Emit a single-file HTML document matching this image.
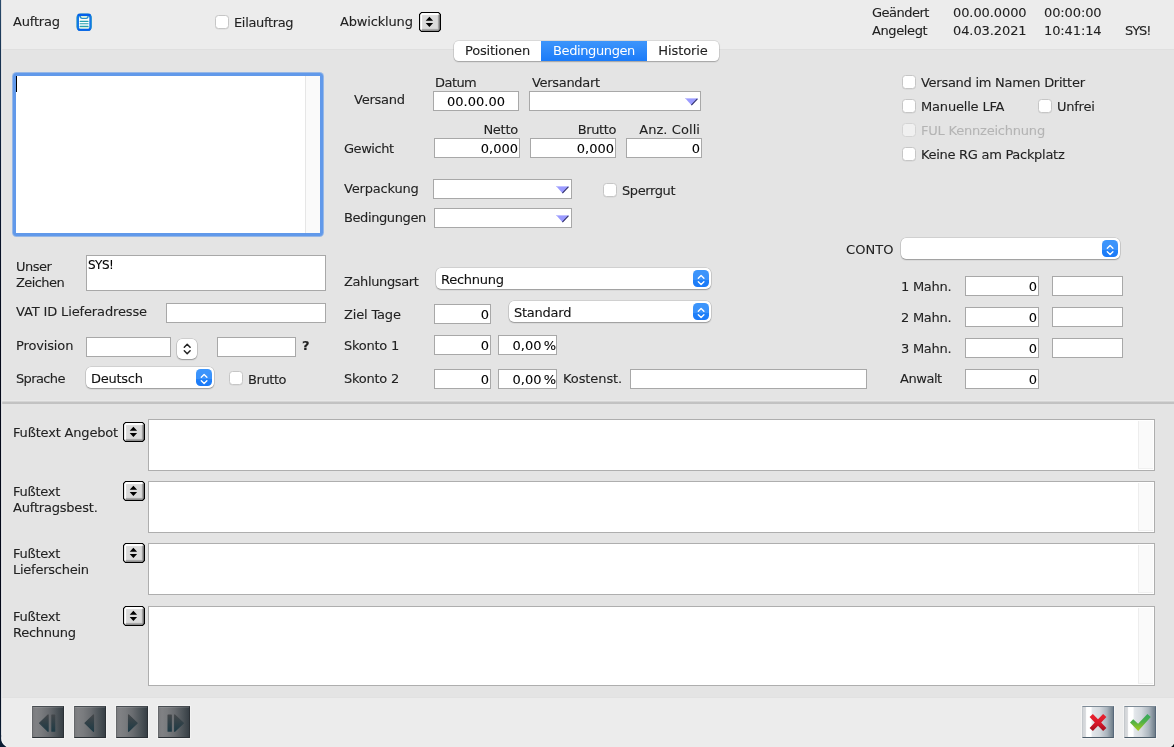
<!DOCTYPE html>
<html lang="de">
<head>
<meta charset="utf-8">
<title>Auftrag – Bedingungen</title>
<style>
*{box-sizing:border-box;margin:0;padding:0}
html,body{width:1174px;height:747px;overflow:hidden;background:#e4e4e4}
body{position:relative;font-family:"DejaVu Sans","Liberation Sans",sans-serif;font-size:13px;color:#222;letter-spacing:-0.25px;-webkit-text-stroke:0.1px currentColor}
#w{position:absolute;left:0;top:0;width:1174px;height:747px;will-change:transform;opacity:.999}
.abs,.l,.f,.cb,.st,.sel,.combo,.ta{position:absolute}
.l{white-space:nowrap;line-height:16px;height:16px;margin-top:1px}
.r{text-align:right}
.f{color:#000;background:#fff;border:1px solid #a8a8a8;height:20px;line-height:20px;white-space:nowrap;overflow:hidden;letter-spacing:0}
.f.r{padding-right:1px}
.f.c{text-align:center}
.cb{width:14px;height:14px;border-radius:3.5px;background:#fff;border:1px solid #c6c6c6;box-shadow:0 0.5px 0.5px rgba(0,0,0,.08)}
.cb.dis{background:#f0f0f0;border-color:#d4d4d4;box-shadow:none}
.dis{color:#b4b4b4}
.st{width:22px;height:20px}
.st svg{position:absolute;left:0;top:0}
.sel{color:#111;height:21px;border-radius:5px;background:#fff;box-shadow:0 0 0 0.5px rgba(0,0,0,.18),0 1px 1.5px rgba(0,0,0,.28);line-height:23px;padding-left:5px;white-space:nowrap}
.sel i{position:absolute;right:2px;top:2px;width:16px;height:17px;border-radius:4.5px;background:linear-gradient(#3d96fb 0,#3991fb 58%,#2081f9 58%,#1a79f8 100%)}
.sel i svg{position:absolute;left:0;top:0}
.combo{background:#fff;border:1px solid #a8a8a8;height:20px}
.combo svg{position:absolute;right:2px;top:6px}
.ta{background:#fff;border:1px solid #aeaeae}
.ta u{position:absolute;right:1px;top:1px;bottom:1px;width:15px;background:#fafafa;border-left:1px solid #ededed;border-bottom:1px solid #f0f0f0}
.nav{position:absolute;width:32px;height:32px;top:706px;border:1px solid #2b3035;border-top-color:#474c51;border-left-color:#66686b;background:linear-gradient(90deg,#7a7b7e 0%,#808184 10%,#797b7e 28%,#696c70 52%,#4c5358 80%,#373f45 100%);box-shadow:inset 0 1px 0 rgba(255,255,255,.10),0 0 0 1px rgba(255,255,255,.35)}
.nav svg{position:absolute;left:0;top:0}
.ok{position:absolute;width:32px;height:32px;top:706px;border:1px solid #58687a;border-top-color:#7d8a96;border-left-color:#c4c8cc;border-bottom-color:#4d5d6a;background:linear-gradient(90deg,#d2d5d8 0%,#d8dadd 8%,#ffffff 12%,#ffffff 26%,#e2e6ea 32%,#d4d9de 55%,#aab4bd 80%,#6e7d89 100%);box-shadow:0 0 0 1px rgba(255,255,255,.4)}
.ok svg{position:absolute;left:0;top:0}
</style>
</head>
<body><div id="w">
<!-- header band -->
<div class="abs" style="left:0;top:0;width:1174px;height:50px;background:#ececec;border-bottom:1px solid #dfdfdf"></div>
<!-- bottom band -->
<div class="abs" style="left:0;top:697px;width:1174px;height:50px;background:#ececec;border-top:1px solid #e1e1e1"></div>
<!-- separator -->
<div class="abs" style="left:0;top:400px;width:1174px;height:4px;background:linear-gradient(180deg,#e8e8e8 0,#e8e8e8 25%,#d5d5d5 25%,#d5d5d5 50%,#c3c3c3 50%,#c1c1c1 100%)"></div>
<!-- left dark edge -->
<div class="abs" style="left:0;top:0;width:1px;height:747px;background:linear-gradient(180deg,#2b4c6d 0,#1a3756 6%,#0c1a33 22%,#050a1a 45%,#030818 90%,#0b2038 100%)"></div><div class="abs" style="left:1px;top:0;width:1px;height:747px;background:#dcdde0"></div><div class="abs" style="left:2px;top:0;width:1px;height:747px;background:rgba(255,255,255,.15)"></div>

<!-- HEADER -->
<div class="l" style="left:13px;top:13px;letter-spacing:-0.18px">Auftrag</div>
<svg class="abs" style="left:76px;top:13px" width="17" height="19" viewBox="0 0 17 19">
  <rect x="0.3" y="0.5" width="15.7" height="17.5" rx="4.2" fill="#3fb6a4" opacity=".75"/>
  <rect x="0.7" y="0.8" width="14.9" height="16.9" rx="3.9" fill="#1277e6"/>
  <rect x="1.6" y="0.8" width="13.1" height="2.3" rx="1.1" fill="#0560ea"/>
  <rect x="1.6" y="15.4" width="13.1" height="2.3" rx="1.1" fill="#0560ea"/>
  <rect x="3" y="3.1" width="10.3" height="12.4" rx="1.6" fill="#fbfefd"/>
  <rect x="3.2" y="14" width="9.9" height="1.4" rx=".7" fill="#d6eede"/>
  <path d="M4.2 3.1C4.2 5.3 5 5.4 6.2 5.4H10.1C11.3 5.4 12.1 5.3 12.1 3.1" fill="#d9f0dc" stroke="#2a8fca" stroke-width="1.3"/>
  <rect x="5.9" y="3.1" width="4.5" height="1.5" fill="#d9f0dc"/>
  <path d="M4.1 8.3h8M4.1 10.75h8M4.1 13.4h8" stroke="#27a0ae" stroke-width="1.15" stroke-linecap="round"/>
</svg>
<div class="cb" style="left:215px;top:15px"></div>
<div class="l" style="left:234px;top:14px;letter-spacing:-0.34px">Eilauftrag</div>
<div class="l" style="left:340px;top:13px;letter-spacing:-0.17px">Abwicklung</div>
<div class="st" style="left:419px;top:12px"><svg width="22" height="20" viewBox="0 0 22 20"><rect x="1" y="1" width="20" height="18" fill="#dbdbdb"/><rect x="1" y="1" width="20" height="2.1" fill="#fff"/><rect x="1" y="1" width="2.1" height="18" fill="#fff"/><rect x="18.7" y="3.1" width=".8" height="14.3" fill="#c2c2c2"/><rect x="19.4" y="2.6" width="1.6" height="16.4" fill="#868686"/><rect x="3.1" y="16.7" width="16.3" height=".8" fill="#c8c8c8"/><rect x="2.6" y="17.4" width="18.4" height="1.6" fill="#8e8e8e"/><path fill-rule="evenodd" d="M2.2 0h17.6L22 2.2v15.6L19.8 20H2.2L0 17.8V2.2zM2.7 1.1L1.1 2.7v14.6l1.6 1.6h16.6l1.6-1.6V2.7l-1.6-1.6z" fill="#000"/><path d="M10.4 4.8L14.1 8.8H6.7zM6.7 11.1h7.4L10.4 15.1z" fill="#000"/></svg></div>

<div class="l" style="left:872px;top:4px;letter-spacing:-0.52px">Geändert</div>
<div class="l" style="left:953px;top:4px;letter-spacing:-0.09px">00.00.0000</div>
<div class="l" style="left:1044px;top:4px;letter-spacing:-0.11px">00:00:00</div>
<div class="l" style="left:872px;top:22px;letter-spacing:-0.39px">Angelegt</div>
<div class="l" style="left:953px;top:22px;letter-spacing:-0.09px">04.03.2021</div>
<div class="l" style="left:1044px;top:22px;letter-spacing:-0.11px">10:41:14</div>
<div class="l" style="left:1125px;top:22px;letter-spacing:-1.1px">SYS!</div>

<!-- TABS -->
<div class="abs" style="left:454px;top:41px;width:265px;height:20px;border-radius:4.5px;background:#fff;box-shadow:0 0 0 0.5px rgba(0,0,0,.15),0 1px 1.5px rgba(0,0,0,.25);overflow:hidden">
  <div class="l" style="left:0;top:1px;width:87px;text-align:center;letter-spacing:-0.2px">Positionen</div>
  <div class="abs" style="left:87px;top:0;width:106px;height:20px;background:linear-gradient(#3d95fb,#1b7bf9)"></div>
  <div class="l" style="left:87px;top:1px;width:106px;text-align:center;color:#fff;-webkit-text-stroke:0;letter-spacing:-0.4px">Bedingungen</div>
  <div class="l" style="left:193px;top:1px;width:72px;text-align:center;letter-spacing:-0.11px">Historie</div>
</div>

<!-- big textarea with focus ring -->
<div class="abs" style="left:13px;top:73px;width:310px;height:163px;border-radius:3.5px;background:#6199ea;box-shadow:0 0 0 1px rgba(97,153,234,.6)"></div>
<div class="abs" style="left:16px;top:76px;width:304px;height:157px;background:#fff"></div>
<div class="abs" style="left:305px;top:76px;width:15px;height:157px;background:#fafafa;border-left:1px solid #e6e6e6"></div>
<div class="abs" style="left:16px;top:76px;width:1px;height:16px;background:#000"></div>

<!-- Versand block -->
<div class="l" style="left:435px;top:74px;letter-spacing:-0.55px">Datum</div>
<div class="l" style="left:532px;top:74px;letter-spacing:-0.31px">Versandart</div>
<div class="l" style="left:354px;top:91px">Versand</div>
<div class="f c" style="left:433px;top:91px;width:86px">00.00.00</div>
<div class="combo" style="left:529px;top:91px;width:172px"><svg width="13" height="8" viewBox="0 0 13 8"><path d="M0 0h13L6.5 7.2z" fill="#9b9bff"/><path d="M0.5 0.4h12" stroke="#c9c9ff" stroke-width=".9"/><path d="M6.4 7.1L12.4 0.9" stroke="#2b2b66" stroke-width="1.1"/></svg></div>

<div class="l r" style="left:434px;top:121px;width:84px">Netto</div>
<div class="l r" style="left:530px;top:121px;width:86px;letter-spacing:-0.42px">Brutto</div>
<div class="l r" style="left:620px;top:121px;width:80px;letter-spacing:0.07px">Anz. Colli</div>
<div class="l" style="left:344px;top:140px;letter-spacing:-0.45px">Gewicht</div>
<div class="f r" style="left:434px;top:138px;width:86px">0,000</div>
<div class="f r" style="left:530px;top:138px;width:86px">0,000</div>
<div class="f r" style="left:626px;top:138px;width:76px">0</div>

<div class="l" style="left:344px;top:180px;letter-spacing:-0.18px">Verpackung</div>
<div class="combo" style="left:433px;top:179px;width:139px"><svg width="13" height="8" viewBox="0 0 13 8"><path d="M0 0h13L6.5 7.2z" fill="#9b9bff"/><path d="M0.5 0.4h12" stroke="#c9c9ff" stroke-width=".9"/><path d="M6.4 7.1L12.4 0.9" stroke="#2b2b66" stroke-width="1.1"/></svg></div>
<div class="cb" style="left:603px;top:183px"></div>
<div class="l" style="left:622px;top:182px;letter-spacing:-0.4px">Sperrgut</div>
<div class="l" style="left:344px;top:209px;letter-spacing:-0.4px">Bedingungen</div>
<div class="combo" style="left:434px;top:208px;width:138px"><svg width="13" height="8" viewBox="0 0 13 8"><path d="M0 0h13L6.5 7.2z" fill="#9b9bff"/><path d="M0.5 0.4h12" stroke="#c9c9ff" stroke-width=".9"/><path d="M6.4 7.1L12.4 0.9" stroke="#2b2b66" stroke-width="1.1"/></svg></div>

<!-- right checkboxes -->
<div class="cb" style="left:902px;top:75px"></div>
<div class="l" style="left:921px;top:74px;letter-spacing:-0.27px">Versand im Namen Dritter</div>
<div class="cb" style="left:902px;top:99px"></div>
<div class="l" style="left:921px;top:98px;letter-spacing:-0.18px">Manuelle LFA</div>
<div class="cb" style="left:1038px;top:99px"></div>
<div class="l" style="left:1057px;top:98px">Unfrei</div>
<div class="cb dis" style="left:902px;top:123px"></div>
<div class="l dis" style="left:921px;top:122px;letter-spacing:-0.21px">FUL Kennzeichnung</div>
<div class="cb" style="left:902px;top:147px"></div>
<div class="l" style="left:921px;top:146px;letter-spacing:-0.29px">Keine RG am Packplatz</div>

<div class="l" style="left:846px;top:241px;letter-spacing:0.05px">CONTO</div>
<div class="sel" style="left:901px;top:238px;width:219px"><i><svg width="16" height="17" viewBox="0 0 16 17"><path d="M5.3 8.3L8.1 5.5l2.8 2.8M5.3 11.7l2.8 2.8 2.8-2.8" fill="none" stroke="#fff" stroke-width="1.35" stroke-linecap="round" stroke-linejoin="round"/></svg></i></div>

<!-- left column -->
<div class="l" style="left:16px;top:258px;letter-spacing:-0.53px">Unser</div>
<div class="l" style="left:16px;top:274px;letter-spacing:-0.58px">Zeichen</div>
<div class="f" style="left:86px;top:255px;width:240px;height:36px;padding-left:1px;line-height:19px;font-size:12px;letter-spacing:-.5px">SYS!</div>
<div class="l" style="left:16px;top:303px;letter-spacing:-0.13px">VAT ID Lieferadresse</div>
<div class="f" style="left:166px;top:303px;width:160px"></div>
<div class="l" style="left:16px;top:337px;letter-spacing:-0.14px">Provision</div>
<div class="f" style="left:86px;top:337px;width:85px"></div>
<div class="abs" style="left:177px;top:339px;width:20px;height:19.5px;border-radius:5px;background:#fff;box-shadow:0 0 0 0.5px rgba(0,0,0,.2),0 1px 1.5px rgba(0,0,0,.28)"><svg width="21" height="21" viewBox="0 0 21 21" style="position:absolute;left:0;top:0"><path d="M7.3 8.2L10.2 5.3l2.9 2.9M7.3 11.8l2.9 2.9 2.9-2.9" fill="none" stroke="#222" stroke-width="1.5" stroke-linecap="round" stroke-linejoin="round"/></svg></div>
<div class="f" style="left:217px;top:337px;width:79px"></div>
<div class="l" style="left:302px;top:337px;font-weight:bold">?</div>
<div class="l" style="left:16px;top:370px;letter-spacing:-0.63px">Sprache</div>
<div class="sel" style="left:86px;top:367px;width:128px;padding-left:5px">Deutsch<i><svg width="16" height="17" viewBox="0 0 16 17"><path d="M5.3 8.3L8.1 5.5l2.8 2.8M5.3 11.7l2.8 2.8 2.8-2.8" fill="none" stroke="#fff" stroke-width="1.35" stroke-linecap="round" stroke-linejoin="round"/></svg></i></div>
<div class="cb" style="left:229px;top:371px"></div>
<div class="l" style="left:248px;top:371px;letter-spacing:-0.42px">Brutto</div>

<!-- middle column -->
<div class="l" style="left:344px;top:273px;letter-spacing:-0.38px">Zahlungsart</div>
<div class="sel" style="left:436px;top:268px;width:275px">Rechnung<i><svg width="16" height="17" viewBox="0 0 16 17"><path d="M5.3 8.3L8.1 5.5l2.8 2.8M5.3 11.7l2.8 2.8 2.8-2.8" fill="none" stroke="#fff" stroke-width="1.35" stroke-linecap="round" stroke-linejoin="round"/></svg></i></div>
<div class="l" style="left:344px;top:306px;letter-spacing:-0.17px">Ziel Tage</div>
<div class="f r" style="left:434px;top:304px;width:57px">0</div>
<div class="sel" style="left:509px;top:301px;width:202px">Standard<i><svg width="16" height="17" viewBox="0 0 16 17"><path d="M5.3 8.3L8.1 5.5l2.8 2.8M5.3 11.7l2.8 2.8 2.8-2.8" fill="none" stroke="#fff" stroke-width="1.35" stroke-linecap="round" stroke-linejoin="round"/></svg></i></div>
<div class="l" style="left:344px;top:337px">Skonto 1</div>
<div class="f r" style="left:434px;top:335px;width:57px">0</div>
<div class="f r" style="left:498px;top:335px;width:59px;padding-right:0">0,00<span style="margin-left:-2px"> </span>%</div>
<div class="l" style="left:344px;top:370px">Skonto 2</div>
<div class="f r" style="left:434px;top:369px;width:57px">0</div>
<div class="f r" style="left:498px;top:369px;width:59px;padding-right:0">0,00<span style="margin-left:-2px"> </span>%</div>
<div class="l" style="left:563px;top:370px;letter-spacing:-0.09px">Kostenst.</div>
<div class="f" style="left:630px;top:369px;width:237px"></div>

<!-- right column -->
<div class="l" style="left:901px;top:278px">1 Mahn.</div>
<div class="f r" style="left:965px;top:276px;width:74px">0</div>
<div class="f" style="left:1052px;top:276px;width:71px"></div>
<div class="l" style="left:901px;top:309px">2 Mahn.</div>
<div class="f r" style="left:965px;top:307px;width:74px">0</div>
<div class="f" style="left:1052px;top:307px;width:71px"></div>
<div class="l" style="left:901px;top:340px">3 Mahn.</div>
<div class="f r" style="left:965px;top:338px;width:74px">0</div>
<div class="f" style="left:1052px;top:338px;width:71px"></div>
<div class="l" style="left:900px;top:370px;letter-spacing:-0.45px">Anwalt</div>
<div class="f r" style="left:965px;top:369px;width:74px">0</div>

<!-- FOOTER TEXTS -->
<div class="l" style="left:13px;top:424px;letter-spacing:-0.18px">Fußtext Angebot</div>
<div class="st" style="left:123px;top:422px"><svg width="22" height="20" viewBox="0 0 22 20"><rect x="1" y="1" width="20" height="18" fill="#dbdbdb"/><rect x="1" y="1" width="20" height="2.1" fill="#fff"/><rect x="1" y="1" width="2.1" height="18" fill="#fff"/><rect x="18.7" y="3.1" width=".8" height="14.3" fill="#c2c2c2"/><rect x="19.4" y="2.6" width="1.6" height="16.4" fill="#868686"/><rect x="3.1" y="16.7" width="16.3" height=".8" fill="#c8c8c8"/><rect x="2.6" y="17.4" width="18.4" height="1.6" fill="#8e8e8e"/><path fill-rule="evenodd" d="M2.2 0h17.6L22 2.2v15.6L19.8 20H2.2L0 17.8V2.2zM2.7 1.1L1.1 2.7v14.6l1.6 1.6h16.6l1.6-1.6V2.7l-1.6-1.6z" fill="#000"/><path d="M10.4 4.8L14.1 8.8H6.7zM6.7 11.1h7.4L10.4 15.1z" fill="#000"/></svg></div>
<div class="ta" style="left:148px;top:419px;width:1007px;height:52px"><u></u></div>

<div class="l" style="left:13px;top:483px">Fußtext</div>
<div class="l" style="left:13px;top:499px;letter-spacing:-0.2px">Auftragsbest.</div>
<div class="st" style="left:123px;top:481px"><svg width="22" height="20" viewBox="0 0 22 20"><rect x="1" y="1" width="20" height="18" fill="#dbdbdb"/><rect x="1" y="1" width="20" height="2.1" fill="#fff"/><rect x="1" y="1" width="2.1" height="18" fill="#fff"/><rect x="18.7" y="3.1" width=".8" height="14.3" fill="#c2c2c2"/><rect x="19.4" y="2.6" width="1.6" height="16.4" fill="#868686"/><rect x="3.1" y="16.7" width="16.3" height=".8" fill="#c8c8c8"/><rect x="2.6" y="17.4" width="18.4" height="1.6" fill="#8e8e8e"/><path fill-rule="evenodd" d="M2.2 0h17.6L22 2.2v15.6L19.8 20H2.2L0 17.8V2.2zM2.7 1.1L1.1 2.7v14.6l1.6 1.6h16.6l1.6-1.6V2.7l-1.6-1.6z" fill="#000"/><path d="M10.4 4.8L14.1 8.8H6.7zM6.7 11.1h7.4L10.4 15.1z" fill="#000"/></svg></div>
<div class="ta" style="left:148px;top:481px;width:1007px;height:52px"><u></u></div>

<div class="l" style="left:13px;top:545px">Fußtext</div>
<div class="l" style="left:13px;top:561px">Lieferschein</div>
<div class="st" style="left:123px;top:543px"><svg width="22" height="20" viewBox="0 0 22 20"><rect x="1" y="1" width="20" height="18" fill="#dbdbdb"/><rect x="1" y="1" width="20" height="2.1" fill="#fff"/><rect x="1" y="1" width="2.1" height="18" fill="#fff"/><rect x="18.7" y="3.1" width=".8" height="14.3" fill="#c2c2c2"/><rect x="19.4" y="2.6" width="1.6" height="16.4" fill="#868686"/><rect x="3.1" y="16.7" width="16.3" height=".8" fill="#c8c8c8"/><rect x="2.6" y="17.4" width="18.4" height="1.6" fill="#8e8e8e"/><path fill-rule="evenodd" d="M2.2 0h17.6L22 2.2v15.6L19.8 20H2.2L0 17.8V2.2zM2.7 1.1L1.1 2.7v14.6l1.6 1.6h16.6l1.6-1.6V2.7l-1.6-1.6z" fill="#000"/><path d="M10.4 4.8L14.1 8.8H6.7zM6.7 11.1h7.4L10.4 15.1z" fill="#000"/></svg></div>
<div class="ta" style="left:148px;top:543px;width:1007px;height:52px"><u></u></div>

<div class="l" style="left:13px;top:608px">Fußtext</div>
<div class="l" style="left:13px;top:624px">Rechnung</div>
<div class="st" style="left:123px;top:606px"><svg width="22" height="20" viewBox="0 0 22 20"><rect x="1" y="1" width="20" height="18" fill="#dbdbdb"/><rect x="1" y="1" width="20" height="2.1" fill="#fff"/><rect x="1" y="1" width="2.1" height="18" fill="#fff"/><rect x="18.7" y="3.1" width=".8" height="14.3" fill="#c2c2c2"/><rect x="19.4" y="2.6" width="1.6" height="16.4" fill="#868686"/><rect x="3.1" y="16.7" width="16.3" height=".8" fill="#c8c8c8"/><rect x="2.6" y="17.4" width="18.4" height="1.6" fill="#8e8e8e"/><path fill-rule="evenodd" d="M2.2 0h17.6L22 2.2v15.6L19.8 20H2.2L0 17.8V2.2zM2.7 1.1L1.1 2.7v14.6l1.6 1.6h16.6l1.6-1.6V2.7l-1.6-1.6z" fill="#000"/><path d="M10.4 4.8L14.1 8.8H6.7zM6.7 11.1h7.4L10.4 15.1z" fill="#000"/></svg></div>
<div class="ta" style="left:148px;top:606px;width:1007px;height:80px"><u></u></div>

<!-- NAV BUTTONS -->
<div class="nav" style="left:32px"><svg width="30" height="30" viewBox="0 0 30 30"><defs><linearGradient id="ng" x1="0" y1="0" x2="0" y2="1"><stop offset="0" stop-color="#44474a"/><stop offset="1" stop-color="#1e3a45"/></linearGradient></defs><path d="M15.1 7.9v16.4L6.6 16.1z" fill="url(#ng)" stroke="url(#ng)" stroke-width="1.2" stroke-linejoin="round"/><rect x="18.3" y="7.4" width="4" height="17.4" rx=".6" fill="url(#ng)"/></svg></div>
<div class="nav" style="left:74px"><svg width="30" height="30" viewBox="0 0 30 30"><path d="M18.5 7.9v16.4L10 16.1z" fill="url(#ng)" stroke="url(#ng)" stroke-width="1.2" stroke-linejoin="round"/></svg></div>
<div class="nav" style="left:116px"><svg width="30" height="30" viewBox="0 0 30 30"><path d="M11.55 7.9v16.4l8.65-8.2z" fill="url(#ng)" stroke="url(#ng)" stroke-width="1.2" stroke-linejoin="round"/></svg></div>
<div class="nav" style="left:158px"><svg width="30" height="30" viewBox="0 0 30 30"><path d="M15.7 7.9v16.4l8.7-8.2z" fill="url(#ng)" stroke="url(#ng)" stroke-width="1.2" stroke-linejoin="round"/><rect x="8.5" y="7.4" width="4.4" height="17.4" rx=".6" fill="url(#ng)"/></svg></div>

<div class="ok" style="left:1082px"><svg width="30" height="30" viewBox="0 0 30 30"><defs><linearGradient id="rg" x1="0" y1="0" x2="0" y2="1"><stop offset="0" stop-color="#ea2430"/><stop offset=".55" stop-color="#d8182a"/><stop offset="1" stop-color="#9c0f1c"/></linearGradient></defs><path transform="translate(0,.5)" d="M6.6 9.6l3.3-3.2 5.1 5.3 5.1-5.3 3.3 3.2-5.2 5.4 5.2 5.4-3.3 3.2-5.1-5.3-5.1 5.3-3.3-3.2 5.2-5.4z" fill="url(#rg)"/></svg></div>
<div class="ok" style="left:1124px"><svg width="30" height="30" viewBox="0 0 30 30"><defs><linearGradient id="gg" x1="0" y1="0" x2="0" y2="1"><stop offset="0" stop-color="#35a85f"/><stop offset=".45" stop-color="#4fb048"/><stop offset="1" stop-color="#a8cc18"/></linearGradient></defs><path transform="translate(-.2,.4)" d="M5.2 15l3.2-3.2 4.9 4.6L22.6 6.6l3.4 3L13.4 23.6z" fill="url(#gg)"/></svg></div>

<!-- window corners -->
<svg class="abs" style="left:0;top:735px" width="12" height="12" viewBox="0 0 12 12"><path d="M0 0H1.1V2.4A10.84 10.84 0 0 0 6.8 12H0z" fill="#0a1c33"/><path d="M1.7 2.4A10.3 10.3 0 0 0 7.6 12" fill="none" stroke="#fafafa" stroke-width=".9" opacity=".85"/></svg>
<svg class="abs" style="left:1168px;top:741px" width="6" height="6" viewBox="0 0 6 6"><path d="M6 2.6V6H2.6A7 7 0 0 0 6 2.6z" fill="#030c14"/><path d="M1.9 6A7.4 7.4 0 0 0 6 1.9" fill="none" stroke="#fafafa" stroke-width=".8" opacity=".8"/></svg>
</div></body>
</html>
